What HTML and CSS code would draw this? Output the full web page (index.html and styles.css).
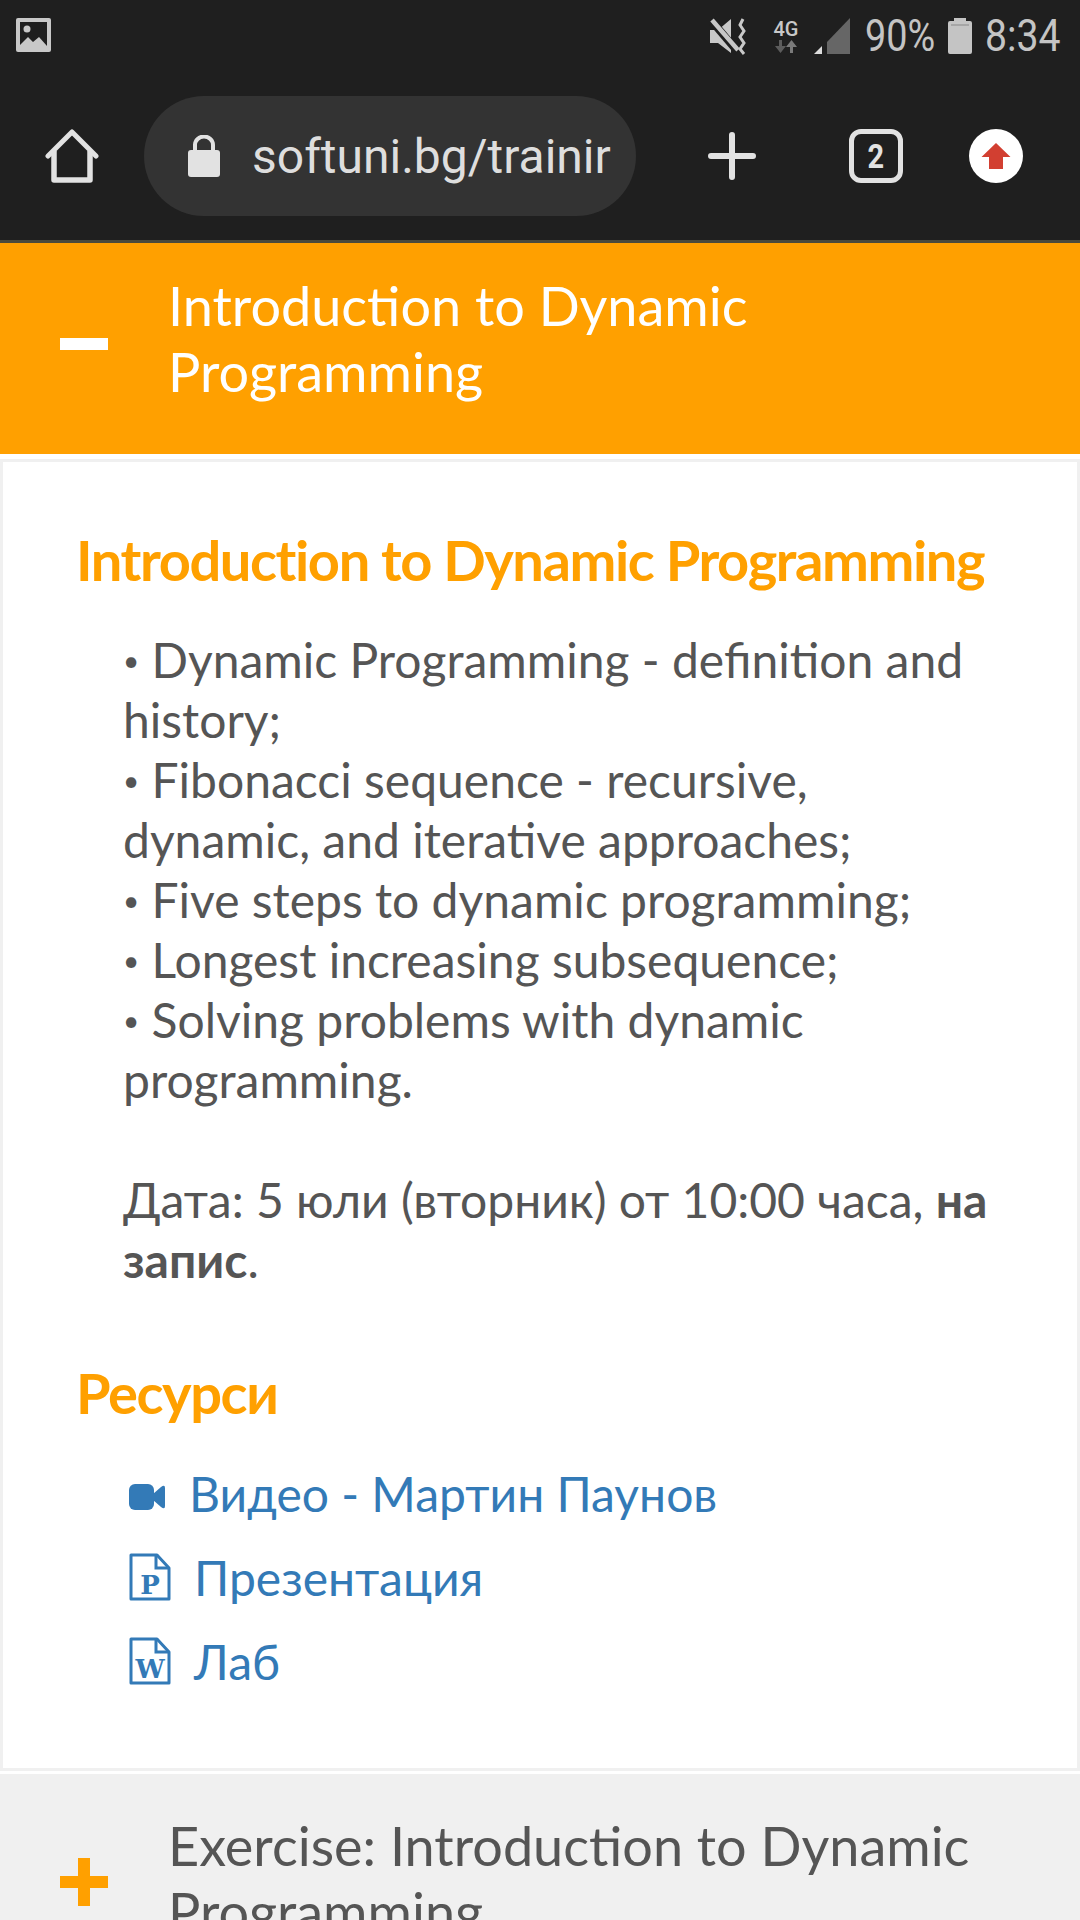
FILE: index.html
```html
<!DOCTYPE html>
<html lang="bg">
<head>
    <meta charset="UTF-8">
    <meta name="viewport" content="width=device-width, initial-scale=1.0">
    <title>Introduction to Dynamic Programming</title>
    <link rel="stylesheet" href="styles.css">
</head>
<body>

    <header class="chrome">
        <div class="status-bar">
            <svg class="status-photo" width="36" height="34" viewBox="0 0 36 34">
                <rect x="0" y="0" width="35" height="34" rx="2" fill="#c8c8c8"/>
                <path d="M4 4h27v24l-8-9-6 5-5-5-8 8z" fill="#1f1f1f"/>
                <circle cx="11" cy="11" r="3.5" fill="#c8c8c8"/>
            </svg>
            <div class="status-right">
                <svg class="mute-icon" width="38" height="37" viewBox="0 0 38 37">
                    <path d="M1 12h8L22 1v34L9 25H1z" fill="#c8c8c8"/>
                    <path d="M1 1l28 33" stroke="#1f1f1f" stroke-width="8"/>
                    <path d="M3 2l26 30" stroke="#c8c8c8" stroke-width="4.500"/>
                    <path d="M34 1l-3 6 4 6-4 6 4 6-4 6 4 5" fill="none" stroke="#c8c8c8" stroke-width="3"/>
                </svg>
                <div class="status-net">
                    <span class="net-label">4G</span>
                    <svg width="24" height="14" viewBox="0 0 24 14">
                        <path d="M5 0h3v6h4l-5.500 7L1 6h4z" fill="#5c5c5c"/>
                        <path d="M16 13h3V7h4l-5.500-7L12 7h4z" fill="#7a7a7a"/>
                    </svg>
                </div>
                <svg class="signal-icon" width="36" height="36" viewBox="0 0 36 36">
                    <path d="M0 36l8-8v8z" fill="#dcdcdc"/>
                    <path d="M13 24L36 0v36H13z" fill="#666"/>
                </svg>
                <span class="status-text battery-text">90%</span>
                <svg class="battery-icon" width="24" height="36" viewBox="0 0 24 36">
                    <path d="M6 0h12v3h4a2 2 0 0 1 2 2v29a2 2 0 0 1-2 2H2a2 2 0 0 1-2-2V5a2 2 0 0 1 2-2h4z" fill="#c4c4c4"/>
                    <path d="M3 7h18" stroke="#888" stroke-width="1"/>
                </svg>
                <span class="status-text clock-text">8:34</span>
            </div>
        </div>
        <div class="toolbar">
            <svg class="home-icon" width="54" height="54" viewBox="0 0 54 54">
                <path d="M3 27L27 3l24 24" fill="none" stroke="#e2e2e2" stroke-width="5" stroke-linecap="round" stroke-linejoin="round"/>
                <path d="M9 22v29h36V22" fill="none" stroke="#e2e2e2" stroke-width="5.500" stroke-linejoin="round"/>
            </svg>
            <div class="url-pill">
                <svg class="lock-icon" width="32" height="42" viewBox="0 0 32 42">
                    <path d="M7 17v-7a9 8.500 0 0 1 18 0v7" fill="none" stroke="#e2e2e2" stroke-width="4"/>
                    <rect x="0" y="15" width="32" height="27" rx="3" fill="#e2e2e2"/>
                </svg>
                <span class="url-text">softuni.bg/trainir</span>
            </div>
            <svg class="plus-icon" width="48" height="48" viewBox="0 0 48 48">
                <path d="M3 24h42M24 3v42" stroke="#e2e2e2" stroke-width="6" stroke-linecap="round"/>
            </svg>
            <div class="tab-count"><span>2</span></div>
            <div class="update-badge">
                <svg width="30" height="26" viewBox="0 0 30 26">
                    <path d="M15 0l14.500 14H22v12H8V14H0.500z" fill="#d23f31"/>
                </svg>
            </div>
        </div>
    </header>

    <main>
        <section class="accordion-head open">
            <span class="toggle minus"></span>
            <h3>Introduction to Dynamic Programming</h3>
        </section>

        <div class="panel">
            <h2>Introduction to Dynamic Programming</h2>
            <p class="topics">
                <span class="dot">•</span> Dynamic Programming - definition and history;<br>
                <span class="dot">•</span> Fibonacci sequence - recursive, dynamic, and iterative approaches;<br>
                <span class="dot">•</span> Five steps to dynamic programming;<br>
                <span class="dot">•</span> Longest increasing subsequence;<br>
                <span class="dot">•</span> Solving problems with dynamic programming.
            </p>
            <p class="date">Дата: 5 юли (вторник) от 10:00 часа, <b>на запис</b>.</p>

            <h2 class="resources-title">Ресурси</h2>
            <ul class="resources">
                <li>
                    <svg class="res-icon video-icon" width="36" height="26" viewBox="0 0 36 26">
                        <rect x="0" y="0" width="25" height="26" rx="6" fill="#337ab7"/>
                        <path d="M24 10l8-7q4-3 4 1v18q0 4-4 1l-8-7z" fill="#337ab7"/>
                    </svg>
                    <a class="video-link" href="#">Видео - Мартин Паунов</a>
                </li>
                <li>
                    <svg class="res-icon" width="42" height="48" viewBox="0 0 42 48">
                        <path d="M2 2h26l12 13v31H2z" fill="none" stroke="#337ab7" stroke-width="3" stroke-linejoin="round"/>
                        <path d="M27 2v13h13" fill="none" stroke="#337ab7" stroke-width="3"/>
                        <text x="21" y="41" class="doc-letter">P</text>
                    </svg>
                    <a class="ppt-link" href="#">Презентация</a>
                </li>
                <li>
                    <svg class="res-icon" width="42" height="48" viewBox="0 0 42 48">
                        <path d="M2 2h26l12 13v31H2z" fill="none" stroke="#337ab7" stroke-width="3" stroke-linejoin="round"/>
                        <path d="M27 2v13h13" fill="none" stroke="#337ab7" stroke-width="3"/>
                        <text x="21" y="41" class="doc-letter">W</text>
                    </svg>
                    <a class="lab-link" href="#">Лаб</a>
                </li>
            </ul>
        </div>

        <section class="accordion-head closed">
            <span class="toggle plus"></span>
            <h3>Exercise: Introduction to Dynamic Programming</h3>
        </section>
    </main>

</body>
</html>
```

FILE: styles.css
```css
html, body {
    margin: 0;
    padding: 0;
}
body {
    width: 1080px;
    height: 1920px;
    overflow: hidden;
    background: #fff;
    font-family: Lato, "Open Sans", sans-serif;
    color: #555;
}
.chrome {
    height: 240px;
    background: #1f1f1f;
    border-bottom: 3px solid #4a4a3c;
}
.status-bar {
    height: 72px;
    padding: 18px 21px 0 16px;
    box-sizing: border-box;
    display: flex;
    justify-content: space-between;
    align-items: flex-start;
}
.status-right {
    display: flex;
    align-items: center;
    height: 36px;
}
.mute-icon {
    margin-right: 25px;
}
.status-net {
    display: flex;
    flex-direction: column;
    align-items: center;
    margin-right: 14px;
    width: 28px;
}
.net-label {
    font-family: Roboto, sans-serif;
    font-size: 20px;
    font-weight: 500;
    line-height: 22px;
    color: #c8c8c8;
}
.status-text {
    font-family: Roboto, sans-serif;
    font-size: 45px;
    line-height: 36px;
    color: #c4c4c4;
    white-space: nowrap;
    transform-origin: left center;
}
.battery-text {
    width: 69px;
    margin: 0 14px 0 15px;
    transform: scaleX(0.84);
}
.clock-text {
    width: 74px;
    margin-left: 13px;
    transform: scaleX(0.87);
}
.toolbar {
    height: 168px;
    display: flex;
    align-items: center;
    box-sizing: border-box;
    padding-left: 45px;
}
.home-icon, .plus-icon, .lock-icon {
    flex: none;
}
.url-pill {
    width: 492px;
    height: 120px;
    margin-left: 45px;
    padding-left: 44px;
    box-sizing: border-box;
    border-radius: 60px;
    background: #333;
    display: flex;
    align-items: center;
    gap: 32px;
    overflow: hidden;
    flex: none;
}
.url-text {
    font-family: Roboto, sans-serif;
    font-size: 48px;
    color: #dedede;
    white-space: nowrap;
}
.plus-icon {
    margin-left: 72px;
}
.tab-count {
    width: 54px;
    height: 54px;
    margin-left: 93px;
    box-sizing: border-box;
    border: 5px solid #e2e2e2;
    border-radius: 12px;
    color: #e2e2e2;
    font-family: Roboto, sans-serif;
    font-size: 34px;
    font-weight: 700;
    display: flex;
    align-items: center;
    justify-content: center;
}
.tab-count span {
    transform: scaleX(0.85);
}
.update-badge {
    width: 54px;
    height: 54px;
    margin-left: 66px;
    border-radius: 50%;
    background: #fff;
    display: flex;
    align-items: center;
    justify-content: center;
}
.accordion-head {
    display: flex;
    align-items: center;
    padding-left: 60px;
    margin: 0;
}
.accordion-head h3 {
    margin: 0 0 0 60px;
    font-size: 54px;
    line-height: 66px;
    font-weight: 400;
    width: 810px;
}
.accordion-head.open {
    height: 211px;
    padding-bottom: 10px;
    box-sizing: border-box;
    background: #ffa000;
    color: #fff;
}
.accordion-head.open h3 {
    margin-top: -10px;
}
.accordion-head.closed {
    height: 146px;
    align-items: flex-start;
    padding-top: 39px;
    box-sizing: border-box;
    background: #f0f0f0;
    margin-top: 3px;
    overflow: hidden;
}
.toggle {
    flex: none;
    width: 48px;
    height: 48px;
    position: relative;
}
.toggle::before {
    content: "";
    position: absolute;
    left: 0;
    top: 18px;
    width: 48px;
    height: 12px;
    background: #fff;
}
.accordion-head.closed .toggle {
    margin-top: 45px;
}
.toggle.plus::before {
    background: #ffa000;
}
.toggle.plus::after {
    content: "";
    position: absolute;
    left: 18px;
    top: 0;
    width: 12px;
    height: 48px;
    background: #ffa000;
}
.panel {
    margin-top: 5px;
    height: 1312px;
    box-sizing: border-box;
    border: 3px solid #f0f0f0;
    padding: 65px 0 0 73px;
    background: #fff;
}
.panel h2 {
    margin: 0;
    color: #ffa000;
    font-size: 56px;
    letter-spacing: -1.400px;
    line-height: 66px;
    font-weight: 700;
}
.topics, .date {
    margin: 0;
    padding-left: 47px;
    padding-right: 72px;
    font-size: 48px;
    line-height: 60px;
}
.topics {
    margin-top: 37px;
    padding-right: 100px;
}
.dot {
    font-size: 28px;
    line-height: 1;
    vertical-align: 7px;
}
.date {
    margin-top: 60px;
}
.resources-title {
    margin-top: 70px !important;
}
.resources {
    list-style: none;
    margin: 25px 0 0;
    padding: 0 0 0 47px;
}
.resources li {
    display: flex;
    align-items: center;
    height: 84px;
}
.res-icon {
    flex: none;
    margin-left: 6px;
}
.video-icon {
    margin-top: 8px;
}
.resources a {
    color: #337ab7;
    font-size: 48px;
    text-decoration: none;
}
.video-link {
    margin-left: 24px;
}
.ppt-link {
    margin-left: 23px;
}
.lab-link {
    margin-left: 23px;
}
.doc-letter {
    font-family: "DejaVu Serif", serif;
    font-size: 26px;
    font-weight: 700;
    text-anchor: middle;
    fill: #337ab7;
}
```
